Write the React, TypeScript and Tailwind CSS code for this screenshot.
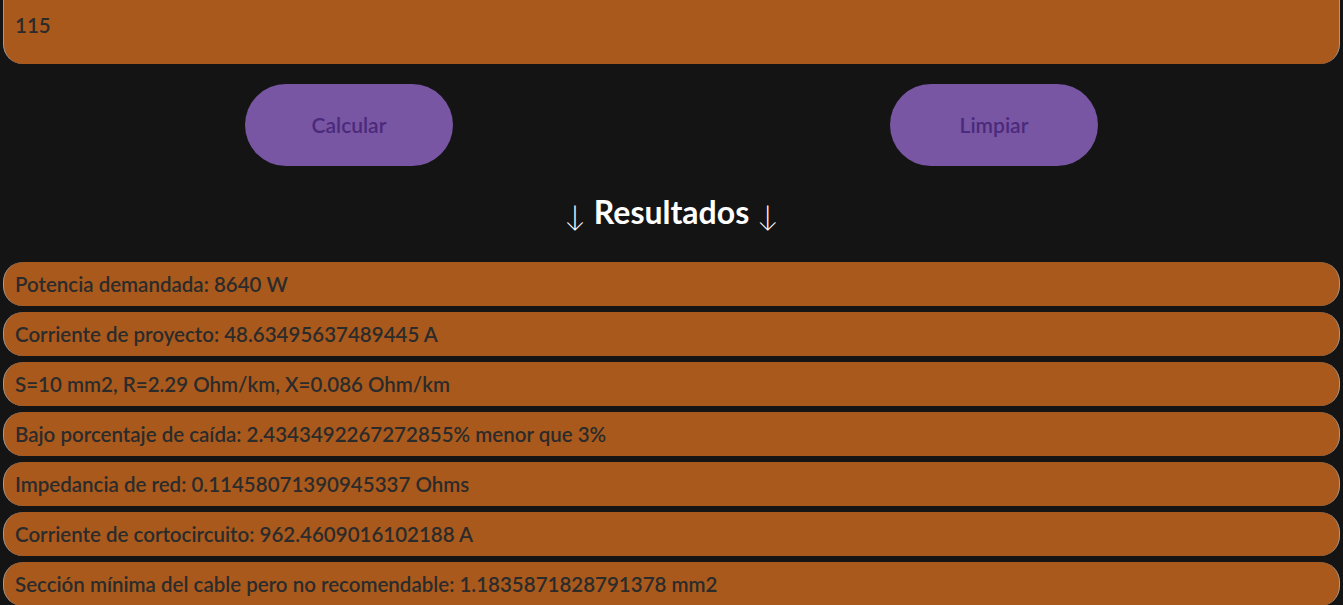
import React from 'react';

const results = [
  'Potencia demandada: 8640 W',
  'Corriente de proyecto: 48.63495637489445 A',
  'S=10 mm2, R=2.29 Ohm/km, X=0.086 Ohm/km',
  'Bajo porcentaje de caída: 2.4343492267272855% menor que 3%',
  'Impedancia de red: 0.11458071390945337 Ohms',
  'Corriente de cortocircuito: 962.4609016102188 A',
  'Sección mínima del cable pero no recomendable: 1.1835871828791378 mm2',
];

const App: React.FC = () => {
  return (
    <div className="min-h-screen bg-[#151415] font-['Lato','Liberation_Sans',sans-serif] overflow-hidden">
      <div className="px-[3px]">
        <div className="-mt-[22px] h-[86px] rounded-[20px] bg-[#a9591c] border-x border-[#a39a94] px-[11px] pt-[32px] text-[20.5px] font-semibold text-[#2b2b2b]">
          115
        </div>
      </div>

      <div className="flex justify-center gap-[437px] mt-[20px]">
        <button className="w-[208px] h-[82px] rounded-full bg-[#7856a3] text-[21px] font-semibold text-[#4b2a7b]">
          Calcular
        </button>
        <button className="w-[208px] h-[82px] rounded-full bg-[#7856a3] text-[21px] font-semibold text-[#4b2a7b]">
          Limpiar
        </button>
      </div>

      <h2 className="mt-[26px] h-[40px] text-center text-[32px] font-bold text-white leading-[40px]">
        <span className="font-light text-[29px] relative top-[2px]">↓</span> Resultados{' '}
        <span className="font-light text-[29px] relative top-[2px]">↓</span>
      </h2>

      <div className="mt-[30px] px-[3px] flex flex-col gap-[6px]">
        {results.map((r, i) => (
          <div
            key={i}
            className="h-[44px] rounded-[20px] bg-[#a9591c] border-x border-[#a39a94] px-[11px] flex items-center text-[20.5px] font-semibold text-[#2b2b2b]"
          >
            {r}
          </div>
        ))}
      </div>
    </div>
  );
};

export default App;
